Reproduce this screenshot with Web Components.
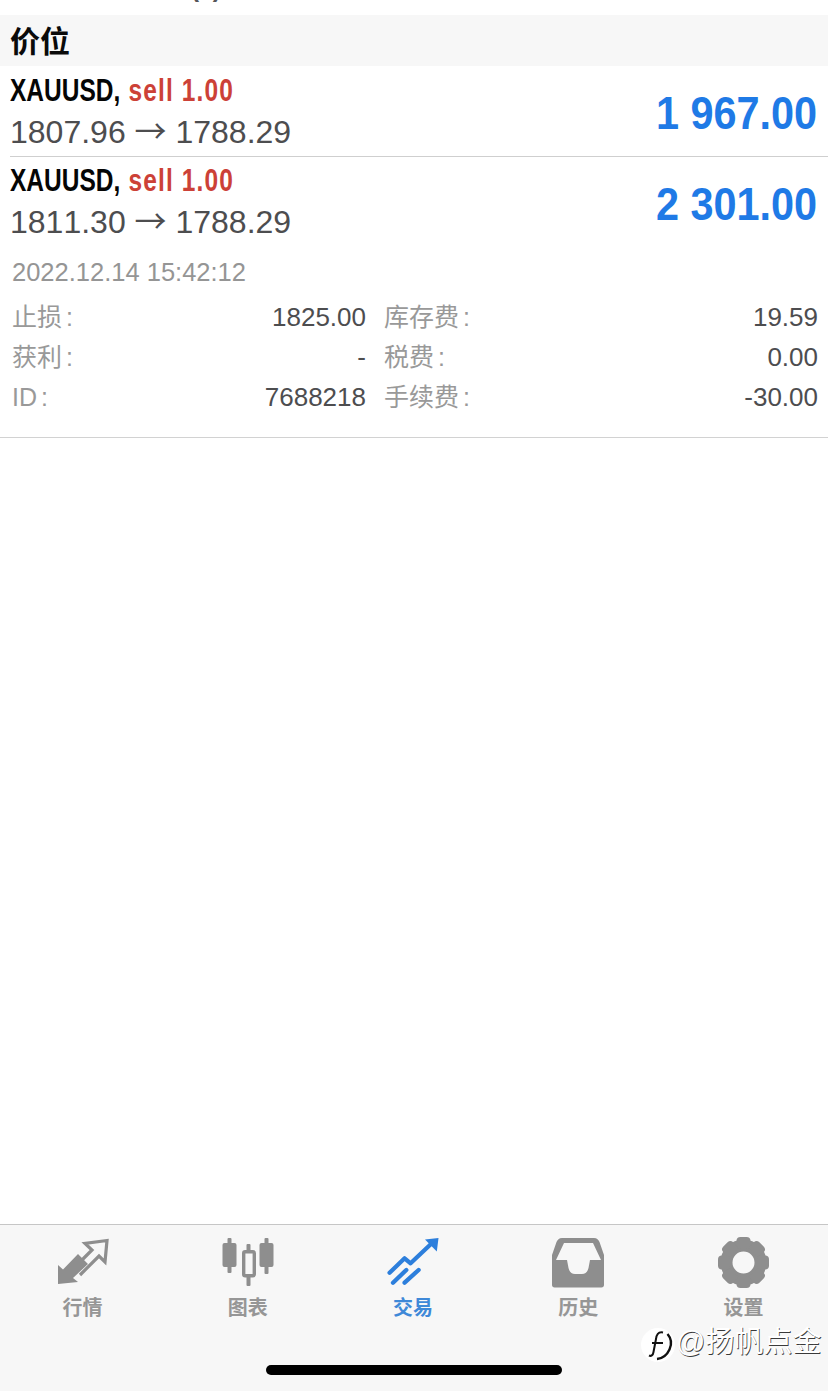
<!DOCTYPE html>
<html lang="zh"><head><meta charset="utf-8"><style>
html,body{margin:0;padding:0;background:#fff}
body{width:828px;height:1391px;overflow:hidden;font-family:"Liberation Sans","Noto Sans CJK SC",sans-serif}
trade-app{display:flex}
</style></head><body>
<trade-app></trade-app>
<script>
const CJK='"Liberation Sans","Noto Sans CJK SC",sans-serif';
class SectionHeader extends HTMLElement{constructor(){super();this.attachShadow({mode:'open'}).innerHTML=`<style>
:host{display:flex;align-items:center;height:51px;background:#f7f7f7;padding-left:10px;font:700 30px/1 ${CJK};color:#0a0a0a}
span{position:relative;top:1px}
</style><span><slot></slot></span>`}}
customElements.define('section-header',SectionHeader);

class PositionRow extends HTMLElement{constructor(){super();const a=n=>this.getAttribute(n);this.attachShadow({mode:'open'}).innerHTML=`<style>
:host{display:flex;justify-content:space-between;height:90px;padding-left:10px;padding-right:11px;box-sizing:border-box}
.left{padding-top:var(--row-top,7px)}
.title{display:block;width:300px;height:36px;font:700 31px/36px "Liberation Sans",sans-serif;color:#050505;transform:scaleX(.79);transform-origin:0 0;white-space:nowrap}
.sell{color:#cc4137;letter-spacing:1.4px;margin-left:2px}
.prices{display:block;font:400 32px/36px "Liberation Sans",sans-serif;font-kerning:none;color:#4d4d4f;padding-top:5px;white-space:nowrap}
.arrow{font-family:"Noto Sans CJK SC",sans-serif;font-size:32px;line-height:0}
.profit{font:700 46px/1 "Liberation Sans",sans-serif;color:#1f7ae6;transform:scaleX(.9);transform-origin:100% 50%;white-space:pre;padding-top:24px}
</style><div class="left"><span class="title">${a('symbol')}, <span class="sell">${a('side')}</span></span><span class="prices">${a('from')} <span class="arrow">→</span> ${a('to')}</span></div><div class="profit">${a('profit')}</div>`}}
customElements.define('position-row',PositionRow);

class TradeDetails extends HTMLElement{constructor(){super();this.attachShadow({mode:'open'}).innerHTML=`<style>
:host{display:block;height:191px;box-sizing:border-box;padding:10px 10px 0 12px;border-bottom:1px solid #d2d2d2}
.time{font:400 25.5px/30px ${CJK};color:#959595;height:30px;margin-bottom:10px}
.grid{display:grid;grid-template-columns:354px 434px;column-gap:18px;row-gap:0}
.cell{display:flex;justify-content:space-between;height:40px;line-height:40px;font-size:26px;color:#4d4d4f;white-space:nowrap}
.l{color:#999;font-size:25px}
.l i{font-style:normal;margin-left:4px}
</style><div class="time"><slot name="time"></slot></div><div class="grid">
<div class="cell"><span class="l">止损<i>:</i></span><span>1825.00</span></div><div class="cell"><span class="l">库存费<i>:</i></span><span>19.59</span></div>
<div class="cell"><span class="l">获利<i>:</i></span><span>-</span></div><div class="cell"><span class="l">税费<i>:</i></span><span>0.00</span></div>
<div class="cell"><span class="l">ID<i>:</i></span><span>7688218</span></div><div class="cell"><span class="l">手续费<i>:</i></span><span>-30.00</span></div>
</div>`}}
customElements.define('trade-details',TradeDetails);

class TabItem extends HTMLElement{constructor(){super();const act=this.hasAttribute('active');this.attachShadow({mode:'open'}).innerHTML=`<style>
:host{display:flex;flex-direction:column;align-items:center;flex:1 1 0;padding-top:12px}
::slotted(svg){display:block;width:56px;height:52px}
.t{font:700 20px/24px ${CJK};margin-top:7px;color:${act?'#3f89d8':'#969696'}}
</style><slot name="icon"></slot><div class="t"><slot></slot></div>`}}
customElements.define('tab-item',TabItem);

class TabBar extends HTMLElement{constructor(){super();this.attachShadow({mode:'open'}).innerHTML=`<style>
:host{display:block;position:relative;height:167px;box-sizing:border-box;background:#f7f7f7;border-top:1px solid #c6c6c6;margin-top:auto}
.tabs{display:flex;height:125px;padding-right:2px}
.home{position:absolute;left:266px;top:140px;width:296px;height:10px;border-radius:5px;background:#000}
.mark{position:absolute;left:641px;top:103px;display:flex;align-items:flex-start;gap:1px}
.logo{width:34px;height:34px;display:block}
.wm{font:400 29px/34px ${CJK};color:#fff;text-shadow:.8px .8px .4px #3a3a3a;white-space:nowrap;margin-top:-3px}
</style><div class="tabs"><slot></slot></div><div class="home"></div>
<div class="mark"><svg class="logo" viewBox="0 0 34 34"><circle cx="17" cy="17" r="17" fill="#fff"/><path d="M11 15H22M22 4.500C17 3.500 15.500 7 15 11L12.500 24C12 27.500 10 28.500 8 27.500" fill="none" stroke="#111" stroke-width="2"/><path d="M26.500 6C30 10 31 16 28.500 21.500C26 27 21 30.500 16 31" fill="none" stroke="#111" stroke-width="2.400"/></svg><span class="wm">@扬帆点金</span></div>`}}
customElements.define('tab-bar',TabBar);

class TradeApp extends HTMLElement{constructor(){super();this.attachShadow({mode:'open'}).innerHTML=`<style>
:host{display:flex;flex-direction:column;width:828px;height:1391px;background:#fff}
.clip{height:15px;overflow:hidden;position:relative;font:400 25px/30px "Liberation Sans",sans-serif;color:#55555a;padding-left:10px}
.clip span{display:block;margin-top:-27px;white-space:pre;font-weight:700}
.sep{height:1px;background:#cfcfcf;margin-left:10px}
.r2{--row-top:6px}
</style>
<div class="clip"><span>SYSDBIN  1.00 (¥)</span></div>
<section-header>价位</section-header>
<position-row symbol="XAUUSD" side="sell 1.00" from="1807.96" to="1788.29" profit="1 967.00"></position-row>
<div class="sep"></div>
<position-row class="r2" symbol="XAUUSD" side="sell 1.00" from="1811.30" to="1788.29" profit="2 301.00"></position-row>
<trade-details><span slot="time">2022.12.14 15:42:12</span></trade-details>
<tab-bar>
<tab-item><svg slot="icon" viewBox="0 0 56 52"><path d="M3 47V28L8 32.500 23 17 33 27 18 41 23 45Z" fill="#8e8e8e"/><path d="M25 38 44 19 50 25 52 3.500 30 6.500 37 13 27 23" fill="none" stroke="#8e8e8e" stroke-width="3.200"/></svg>行情</tab-item>
<tab-item><svg slot="icon" viewBox="0 0 56 52"><g fill="#8e8e8e"><rect x="2.500" y="6" width="14" height="24" rx="2"/><rect x="7.500" y="1" width="4" height="35" rx="1"/><rect x="39.500" y="6" width="14" height="24" rx="2"/><rect x="44.500" y="1" width="4" height="36" rx="1"/><rect x="26.500" y="7" width="4" height="42" rx="1"/></g><rect x="23.700" y="14.700" width="10.600" height="24" rx="1.500" fill="#f7f7f7" stroke="#8e8e8e" stroke-width="3.400"/></svg>图表</tab-item>
<tab-item active><svg slot="icon" viewBox="0 0 56 52"><g fill="none" stroke="#2d7fdc" stroke-width="4.300" stroke-linecap="round" stroke-linejoin="round"><path d="M4.600 35.700 19.600 21.300 25.600 26.300 46 7"/><path d="M8 45.700 21.300 33M19.600 45.700 33.600 33"/></g><path d="M40 2.500 53.500 1 51.800 14.500Z" fill="#2d7fdc"/></svg>交易</tab-item>
<tab-item><svg slot="icon" viewBox="0 0 56 52"><path d="M12 1H44C47 1 48.500 3 49.500 5L54 18V48C54 49.500 53 50.500 51.500 50.500H4.500C3 50.500 2 49.500 2 48V18L6.500 5C7.500 3 9 1 12 1ZM14 6 6 23H17L18.500 31C19.500 35 21.500 37 25 37H32C35.500 37 37.500 35 38.500 31L40 23H51L43 6Z" fill="#8e8e8e" fill-rule="evenodd"/></svg>历史</tab-item>
<tab-item><svg slot="icon" viewBox="0 0 56 52"><g fill="#8e8e8e" transform="translate(0.500 0)"><circle cx="28" cy="25.500" r="17" fill="none" stroke="#8e8e8e" stroke-width="12"/><rect x="21" y="0" width="14" height="12" rx="4"/><rect x="21" y="0" width="14" height="12" rx="4" transform="rotate(45 28 25.500)"/><rect x="21" y="0" width="14" height="12" rx="4" transform="rotate(90 28 25.500)"/><rect x="21" y="0" width="14" height="12" rx="4" transform="rotate(135 28 25.500)"/><rect x="21" y="0" width="14" height="12" rx="4" transform="rotate(180 28 25.500)"/><rect x="21" y="0" width="14" height="12" rx="4" transform="rotate(225 28 25.500)"/><rect x="21" y="0" width="14" height="12" rx="4" transform="rotate(270 28 25.500)"/><rect x="21" y="0" width="14" height="12" rx="4" transform="rotate(315 28 25.500)"/></g></svg>设置</tab-item>
</tab-bar>`}}
customElements.define('trade-app',TradeApp);
</script></body></html>
